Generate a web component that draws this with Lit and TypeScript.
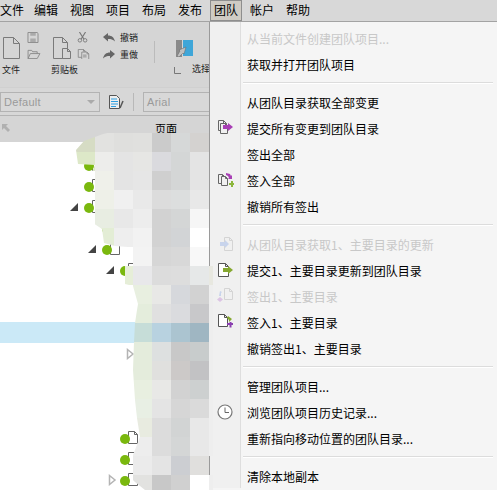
import { LitElement, html, css, svg } from "lit";
import { customElement } from "lit/decorators.js";

const FONT_LABELS = ["文件", "编辑", "视图", "项目", "布局", "发布", "团队", "帐户", "帮助"];

const line = "#7a7a7a";
const doc = (x: number, y: number, w: number, h: number, f = 4, c = line, fill = "none") =>
  svg`<path d="M${x + .5} ${y + .5}h${w - f}l${f} ${f}v${h - f}h${-w}zM${x + w - f + .5} ${y + .5}v${f}h${f}" fill="${fill}" stroke="${c}" stroke-width="1"/>`;

const ICONS: Record<string, unknown> = {
  commitAll: svg`${doc(1, 0, 8, 10, 3, "#666")}${doc(3, 3, 7, 10, 2, "#666", "#f0f0f0")}<path d="M6 5h5V3l5 4-5 4V9H6z" fill="#a83fb5"/>`,
  checkinAll: svg`${doc(1, 2, 6, 9, 2, "#666")}${doc(4, 4, 6, 9, 2, "#666", "#f0f0f0")}<path d="M9 1l4 1 1 2 1-1v4h-4l1-1-1-2-2-1z" fill="#a83fb5"/><path d="M12 11h2V9h2v2h1v2h-1v2h-2v-2h-2z" fill="#8cb63c"/>`,
  getOne: svg`${doc(7, 1, 8, 13, 3, "#d4d4d4")}<path d="M3 6h5V4l4 4-4 4v-2H3z" fill="#c8d4ec"/>`,
  commitOne: svg`${doc(1, 1, 10, 13, 3, "#555", "#fff")}<path d="M6 6h5V4l5 4-5 4v-2H6z" fill="#86a830"/>`,
  checkoutOne: svg`${doc(7, 0, 8, 11, 3, "#d4d4d4")}<path d="M2 8l1-5 2 1-1 1v3z" fill="#c8d4ec"/><path d="M3 9l3 2.500L3 14l-3-2.500z" fill="#dcc4e4"/>`,
  checkinOne: svg`${doc(1, 0, 9, 12, 3, "#555", "#fff")}<path d="M11 2l4 3-3 3V6l-2-2z" fill="#86a830"/><path d="M10 9h2.500V8h2v1H16v2h-1.500v2.500h-2V11H10z" fill="#8a3fb0"/>`,
  clock: svg`<circle cx="8" cy="8" r="7" fill="#fff" stroke="#777" stroke-width="1.200"/><path d="M8 3.500V8.500H12" fill="none" stroke="#666" stroke-width="1"/>`,
};

type Item = { t?: string; off?: boolean; icon?: string; sep?: boolean };
const MENU: Item[] = [
  { t: "从当前文件创建团队项目...", off: true },
  { t: "获取并打开团队项目" },
  { sep: true },
  { t: "从团队目录获取全部变更" },
  { t: "提交所有变更到团队目录", icon: "commitAll" },
  { t: "签出全部" },
  { t: "签入全部", icon: "checkinAll" },
  { t: "撤销所有签出" },
  { sep: true },
  { t: "从团队目录获取1、主要目录的更新", off: true, icon: "getOne" },
  { t: "提交1、主要目录更新到团队目录", icon: "commitOne" },
  { t: "签出1、主要目录", off: true, icon: "checkoutOne" },
  { t: "签入1、主要目录", icon: "checkinOne" },
  { t: "撤销签出1、主要目录" },
  { sep: true },
  { t: "管理团队项目..." },
  { t: "浏览团队项目历史记录...", icon: "clock" },
  { t: "重新指向移动位置的团队目录..." },
  { sep: true },
  { t: "清除本地副本" },
];

type Row = { level: number; tri?: "solid" | "open"; node?: boolean; selected?: boolean };
const TREE: Row[] = [
  { level: 1, node: true },
  { level: 1, node: true },
  { level: 1, tri: "solid", node: true },
  { level: 2, node: true },
  { level: 2, tri: "solid", node: true },
  { level: 3, tri: "solid", node: true },
  { level: 3 },
  { level: 3 },
  { level: 3, selected: true },
  { level: 4, tri: "open" },
  { level: 3 },
  { level: 3 },
  { level: 3 },
  { level: 3, node: true },
  { level: 3, node: true },
  { level: 3, tri: "open", node: true },
];

const T = "transparent";
const MOSAIC: string[][] = [
  ["#d6dcc4", "#e2e2e0", "#dfdfdd", "#e0e0de", "#cbcbcb", "#d6d8d8", "#d4d2d0", T],
  ["#dde8c8", "#ededeb", "#e4e4e4", "#e6e6e4", "#dadade", "#d4d6d6", "#e4e4e4", T],
  [T, "#eff0ea", "#e4e4e4", "#e6e6e6", "#cfcfcf", "#d4d6d6", "#e4e4e4", T],
  [T, "#eef0e8", "#f0f0f0", "#e9e9e9", "#dcdcdc", "#dcdede", "#e8e8e8", T],
  [T, "#e8ede2", "#e8e8e8", "#ededed", "#d2d2d2", "#d4d6d6", "#f6f6f6", T],
  [T, "#e3edd5", "#eeeeee", "#f2f2f2", "#d2d2d2", "#d2d4d6", "#ffffff", T],
  [T, T, T, "#f3f3f3", "#d6d6d6", "#d8d8d8", "#f8f8f8", T],
  [T, T, "#e6eed8", "#e8e8ea", "#dcdcdc", "#dddddd", "#e6e8e8", "#e8e8e0"],
  [T, T, T, "#e8efe0", "#e8e8e6", "#d6d8dc", "#d2d2d2", "#eeeeee"],
  [T, T, T, "#e4eddc", "#e0e0e0", "#dadbde", "#c8c8ca", "#eeeeee"],
  [T, T, T, "#c6ddd8", "#b8d2e0", "#abc4d0", "#9fb6c2", "#eeeeee"],
  [T, T, T, "#e4ecdc", "#dde0e0", "#c8c8c8", "#c8cccc", "#eeeeee"],
  [T, T, T, "#e4ecdc", "#e0e0de", "#ccc9c8", "#c2c2c4", "#eeeeee"],
  [T, T, T, "#e8efe0", "#e8e8e6", "#d2d2d2", "#cdd0d0", "#eeeeee"],
  [T, T, T, "#e8efe4", "#e4e4e4", "#d6d6d6", "#dadada", "#eeeeee"],
  [T, T, T, "#e8ebe0", "#dcdcdc", "#d2d4d4", "#e8e8e8", "#eeeeee"],
  [T, T, T, "#ededed", "#dcdcdc", "#d4d6d6", "#e8e8e8", "#eeeeee"],
  [T, T, T, "#ebebeb", "#e4e4e4", "#ccced2", "#e0dfdd", T],
  [T, T, T, "#e2e2e0", "#c8c8c8", "#d0d0d0", "#ffffff", "#eeeeee"],
];
const OUTLINE: [number, number][] = [
  [103, 134], [112, 132], [140, 133], [213, 133], [213, 490], [145, 490], [135, 482], [129, 476], [129, 468],
  [133, 455], [140, 437], [137, 418], [135, 400], [133, 370], [134, 342], [135, 323], [137, 310], [138, 304],
  [133, 286], [125, 284], [125, 266], [128, 264], [128, 247], [115, 246], [104, 243], [102, 229], [90, 221],
  [87, 208], [92, 172], [95, 165], [78, 164], [76, 150], [84, 141],
];
const clip = `polygon(${OUTLINE.map(([x, y]) => `${x - 76}px ${y - 133}px`).join(",")})`;

@customElement("app-root")
export class AppRoot extends LitElement {
  static styles = css`
    :host {
      display: block;
      position: relative;
      width: 497px;
      height: 490px;
      overflow: hidden;
      background: #fff;
      font-family: "Noto Sans CJK SC", "Liberation Sans", sans-serif;
      color: #000;
    }
    .bar {
      display: flex;
      height: 21px;
      background: #d8d8d8;
      border-bottom: 1px solid #a3a3a3;
      font-size: 12px;
      line-height: 20px;
    }
    .bar-inner { display: flex; }
    .bar-item { margin: 0 2px; padding: 0 4px; width: 24px; white-space: nowrap; }
    .bar-item.first { margin: 0; padding: 0; width: 28px; }
    .bar-item.on {
      background: #cfcbc4;
      outline: 1px solid #8e8e8e;
      outline-offset: -1px;
    }
    .ribbon {
      display: flex;
      height: 55px;
      padding-top: 10px;
      background: #d5d5d5;
      font-size: 9px;
      line-height: 12px;
      color: #222;
    }
    .group { display: flex; flex-direction: column; gap: 5px; }
    .group-icons { display: flex; height: 27px; }
    .big { margin-top: 5px; }
    .small { display: flex; flex-direction: column; gap: 6px; }
    .g1 { margin-left: 2px; width: 50px; }
    .g1 .big { margin-left: 1px; }
    .g1 .small { margin-left: 7px; }
    .g2 { width: 51px; }
    .g2 .big { margin-left: 1px; }
    .g2 .small { margin-left: 6px; }
    .history { display: flex; flex-direction: column; gap: 5px; width: 51px; }
    .h-row { display: flex; align-items: center; gap: 5px; height: 12px; }
    .rsep { width: 1px; height: 22px; margin: 9px 21px 0 0; background: #bbb; }
    .select { display: flex; flex-direction: column; }
    .select-icon { margin-top: 8px; }
    .select-label { display: flex; align-items: flex-end; gap: 11px; margin: 5px 0 0 -2px; white-space: nowrap; }
    .select-label span { position: relative; top: 1px; }
    .format {
      display: flex;
      align-items: center;
      height: 29px;
      background: #d7d7d7;
      border-bottom: 1px solid #b4b4b4;
      border-top: 1px solid #d0d0d0;
      box-sizing: border-box;
      font-family: "Liberation Sans", sans-serif;
      font-size: 11px;
      color: #9a9a9a;
    }
    .field {
      display: flex;
      align-items: center;
      justify-content: space-between;
      box-sizing: border-box;
      height: 20px;
      padding: 0 3px 0 3px;
      border: 1px solid #b3b3b3;
      background: #d8d8d8;
      letter-spacing: 0.3px;
    }
    .f-style { width: 100px; margin-left: 0; }
    .f-font { width: 70px; }
    .chev { width: 0; height: 0; border: 4px solid transparent; border-top-color: #aaa; border-bottom: 0; margin-right: 1px; }
    .style-icon { margin: 0 9px 0 9px; }
    .fsep { width: 1px; height: 18px; background: #b8b8b8; margin-right: 9px; }
    .head {
      display: flex;
      align-items: center;
      height: 26px;
      padding: 0 0 3px 2px;
      box-sizing: border-box;
      background: #d5d5d5;
      font-size: 11px;
    }
    .head span { margin-left: 145px; }
    .tree { padding-top: 12px; }
    .row { display: flex; align-items: center; height: 21px; box-sizing: border-box; }
    .row.sel { background: #cbe9f7; }
    .tri { width: 14px; height: 12px; flex: none; }
    .mosaic {
      position: absolute;
      left: 76px;
      top: 133px;
      display: grid;
      grid-template-columns: repeat(7, 19px) 4px;
      grid-auto-rows: 19px;
      z-index: 3;
    }
    .menu {
      position: absolute;
      left: 209px;
      top: 22px;
      right: 0;
      bottom: 0;
      padding-top: 4px;
      background: #f5f5f5;
      border-left: 1px solid #9a9a9a;
      font-size: 12px;
      z-index: 2;
    }
    .menu::before {
      content: "";
      position: absolute;
      left: 0;
      top: 0;
      bottom: 2px;
      width: 30px;
      background: #f0f0f0;
      border-right: 1px solid #dedede;
    }
    .mi { position: relative; display: flex; align-items: center; height: 26px; }
    .mi-icon { display: flex; justify-content: center; width: 30px; margin-right: 7px; flex: none; }
    .mi-icon svg { margin-bottom: 2px; }
    .mi-text { white-space: nowrap; line-height: 26px; position: relative; top: -0.5px; }
    .mi.off .mi-text { color: #c8c8c8; }
    .msep {
      position: relative;
      height: 1px;
      margin: 4px 4px 7px 33px;
      background: #dcdcdc;
      box-shadow: 0 1px 0 #fff;
    }
  `;

  private icon(name?: string) {
    if (!name) return html`<span class="mi-icon"></span>`;
    return html`<span class="mi-icon"><svg width="17" height="17" viewBox="0 0 17 17">${ICONS[name]}</svg></span>`;
  }

  private node() {
    return html`<svg width="18" height="14" viewBox="0 0 18 14">
      ${doc(8, 0, 9, 12, 3, "#666", "#fff")}
      <circle cx="5" cy="8" r="5" fill="#7ab80e"/>
    </svg>`;
  }

  private tri(kind?: string) {
    if (kind === "solid") {
      return html`<svg class="tri" viewBox="0 0 14 12"><path d="M0 10L8 2V10z" fill="#444"/></svg>`;
    }
    if (kind === "open") {
      return html`<svg class="tri" viewBox="0 0 14 12"><path d="M3.500 1.500L9 6 3.500 10.500z" fill="#fff" stroke="#b4b4b4" stroke-width="1.500"/></svg>`;
    }
    return html`<span class="tri"></span>`;
  }

  render() {
    return html`
      <div class="bar"><div class="bar-inner">
        ${FONT_LABELS.map((l, i) => html`<div class="bar-item ${l === "团队" ? "on" : ""} ${i === 0 ? "first" : ""}">${l}</div>`)}
      </div></div>

      <div class="ribbon">
        <div class="group g1">
          <div class="group-icons">
            <svg class="big" width="17" height="22" viewBox="0 0 17 22">${doc(0, 0, 16, 21, 6)}</svg>
            <div class="small">
              <svg width="12" height="12" viewBox="0 0 12 12"><path d="M.5.500h10l1 1v10H.5z" fill="none" stroke="#888"/><path d="M3 1h6v3H3zM3 7h6v4H3z" fill="#aaa"/></svg>
              <svg width="14" height="11" viewBox="0 0 14 11"><path d="M.5 10.500V1.500h4l1 1.500h5v2M.5 10.500h10l3-5.500H3z" fill="none" stroke="#888"/></svg>
            </div>
          </div>
          <span>文件</span>
        </div>
        <div class="group g2">
          <div class="group-icons">
            <svg class="big" width="18" height="22" viewBox="0 0 18 22">${doc(0, 0, 14, 21, 5)}${doc(9, 11, 8, 10, 3, line, "#d5d5d5")}</svg>
            <div class="small">
              <svg width="11" height="12" viewBox="0 0 11 12"><path d="M2 0l5 8M9 0L4 8" stroke="#777" stroke-width="1.300" fill="none"/><circle cx="2.500" cy="9.500" r="2" fill="none" stroke="#777"/><circle cx="8.500" cy="9.500" r="2" fill="none" stroke="#777"/></svg>
              <svg width="13" height="12" viewBox="0 0 13 12">${doc(0, 0, 8, 9, 2, "#888")}${doc(4, 3, 8, 8.500, 2, "#888", "#d5d5d5")}<path d="M6 7h4M6 9h4" stroke="#888"/></svg>
            </div>
          </div>
          <span style="margin-left:-1px">剪贴板</span>
        </div>
        <div class="history">
          <div class="h-row"><svg width="12" height="10" viewBox="0 0 12 10"><path d="M0 4l5-4v2.500c4 0 6 2 7 6-2-2-4-2.500-7-2.500v2.500z" fill="#666"/></svg><span>撤销</span></div>
          <div class="h-row"><svg width="12" height="10" viewBox="0 0 12 10"><path d="M12 4L7 0v2.500c-4 0-6 2-7 6 2-2 4-2.500 7-2.500v2.500z" fill="#666"/></svg><span>重做</span></div>
        </div>
        <div class="rsep"></div>
        <div class="select">
          <svg class="select-icon" width="17" height="17" viewBox="0 0 17 17">
            <path d="M0 0h6v17H0z" fill="#8a8a8a"/><path d="M7 0h10v16H7z" fill="#3fa6d8"/>
            <path d="M1 16l3-5-1-1 7-3-2 7-1-1-4 4z" fill="#c0c0c0" stroke="#666" stroke-width=".5"/>
          </svg>
          <div class="select-label">
            <svg width="7" height="7" viewBox="0 0 7 7"><path d="M.5 0v6.500H7" fill="none" stroke="#777"/></svg>
            <span>选择</span>
          </div>
        </div>
      </div>

      <div class="format">
        <div class="field f-style">Default<i class="chev"></i></div>
        <svg class="style-icon" width="15" height="14" viewBox="0 0 15 14">
          <path d="M.5.500h7l3 3v10H.5z" fill="#eee" stroke="#555"/>
          <path d="M2 4h6M2 6.500h7M2 9h7M2 11.500h5" stroke="#2c9ee0" stroke-width="1.200"/>
          <path d="M11 13l3-7" stroke="#555" stroke-width="1.500"/>
        </svg>
        <div class="fsep"></div>
        <div class="field f-font">Arial</div>
      </div>

      <div class="head">
        <svg width="8" height="8" viewBox="0 0 8 8"><path d="M0 0h6L4 2l4 4-2 2-4-4-2 2z" fill="#b0b0b0"/></svg>
        <span>页面</span>
      </div>

      <div class="tree">
        ${TREE.map((r) => html`
          <div class="row ${r.selected ? "sel" : ""}" style="padding-left:${70 + 18 * (r.level - 1)}px">
            ${this.tri(r.tri)}
            ${r.node ? this.node() : ""}
          </div>`)}
      </div>

      <div class="mosaic" style="clip-path:${clip}">
        ${MOSAIC.flat().map((c) => html`<div style="background:${c}"></div>`)}
      </div>

      <div class="menu">
        ${MENU.map((m) => m.sep
          ? html`<div class="msep"></div>`
          : html`<div class="mi ${m.off ? "off" : ""}">${this.icon(m.icon)}<span class="mi-text">${m.t}</span></div>`)}
      </div>
    `;
  }
}
